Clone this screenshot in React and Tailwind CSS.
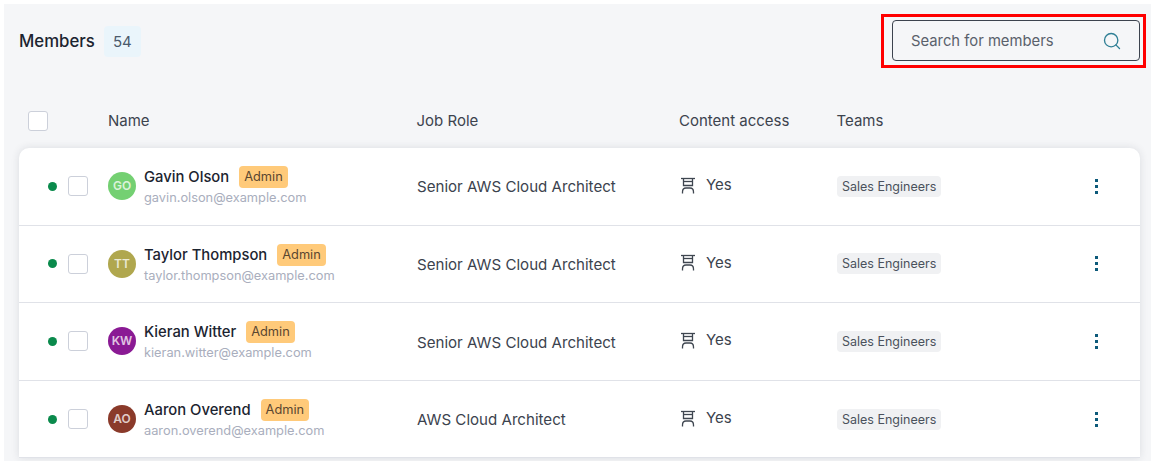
import React from "react";
import { Search } from "lucide-react";

const members = [
  { name: "Gavin Olson", email: "gavin.olson@example.com", initials: "GO", color: "bg-[#74d072]", role: "Senior AWS Cloud Architect" },
  { name: "Taylor Thompson", email: "taylor.thompson@example.com", initials: "TT", color: "bg-[#b0a74e]", role: "Senior AWS Cloud Architect" },
  { name: "Kieran Witter", email: "kieran.witter@example.com", initials: "KW", color: "bg-[#8a1a94]", role: "Senior AWS Cloud Architect" },
  { name: "Aaron Overend", email: "aaron.overend@example.com", initials: "AO", color: "bg-[#8a3a2a]", role: "AWS Cloud Architect" },
];

const AccessIcon = () => (
  <svg width="16" height="17" viewBox="0 0 16 17" fill="none" stroke="#3f4650" strokeWidth="1.3">
    <path d="M1 1.5h14" />
    <path d="M3.5 1.5v7h9v-7" />
    <path d="M3.5 4.5h9" />
    <path d="M2.5 16.5v-1.5c0-2.5 1.5-4 3.5-4h4c2 0 3.5 1.5 3.5 4v1.5" />
  </svg>
);

const Checkbox = () => (
  <div className="w-5 h-5 bg-white border border-[#ccd0da] rounded-[3px]" />
);

const MemberRow = ({ member }) => (
  <div className="flex items-center h-[77.6px] border-b border-[#e0e2e8]">
    <div className="w-[49px] shrink-0 flex justify-end pr-[11px]">
      <span className="w-[9px] h-[9px] rounded-full bg-[#0a8a4c]" />
    </div>
    <Checkbox />
    <div className={`ml-[20px] w-7 h-7 rounded-full flex items-center justify-center text-white/75 text-[12px] font-semibold ${member.color}`}>
      {member.initials}
    </div>
    <div className="ml-[8px] w-[273px] shrink-0">
      <div className="flex items-center gap-[10px]">
        <span className="text-[14.8px] leading-5 font-medium text-[#1c2430]">{member.name}</span>
        <span className="bg-[#ffca7a] text-[#5a4630] text-[12.8px] leading-[22px] px-[5px] rounded-[4px]">Admin</span>
      </div>
      <div className="text-[12.8px] leading-4 text-[#a9aebd] mt-[2px]">{member.email}</div>
    </div>
    <div className="w-[263px] shrink-0 text-[15.1px] text-[#3c434e] pt-[3px]">{member.role}</div>
    <div className="w-[157px] shrink-0 flex items-center gap-[10px] text-[15px] text-[#3c434e] -mt-[2px]">
      <AccessIcon />
      Yes
    </div>
    <div className="w-[258px] shrink-0 -mt-[3px]">
      <span className="inline-block bg-[#f0f1f3] text-[#4a515c] text-[12.5px] leading-[21px] px-[5px] rounded-[4px]">Sales Engineers</span>
    </div>
    <div className="flex flex-col gap-[3px]">
      <span className="w-[3px] h-[3px] bg-[#0d5a7a]" />
      <span className="w-[3px] h-[3px] bg-[#0d5a7a]" />
      <span className="w-[3px] h-[3px] bg-[#0d5a7a]" />
    </div>
  </div>
);

export default function App() {
  return (
    <div className="w-[1169px] h-[475px] bg-white pt-1 pl-1 overflow-hidden font-['Inter','Noto_Sans',sans-serif]">
      <div className="w-[1147px] h-[457px] bg-[#f5f6f8] overflow-hidden px-[15px]">
        <div className="flex items-center justify-between h-[72px] pt-[2px]">
          <div className="flex items-center gap-[9px]">
            <span className="text-[16.8px] font-medium text-[#1c2430] pt-[1px]">Members</span>
            <span className="bg-[#eaf5fb] text-[#4a5a6c] text-[15px] leading-[31px] w-[37px] text-center rounded-[4px]">54</span>
          </div>
          <div className="-mr-[10px] border-[3px] border-[#ff0000] pl-[8px] pr-[3px] pt-[3px] pb-[4px] w-[265px] h-[54px]">
            <div className="h-full border border-[#3c434e] rounded-[4px] flex items-center justify-between pl-[18px] pr-[17px]">
              <span className="text-[14.8px] text-[#5a616c] pt-[1px]">Search for members</span>
              <Search size={20} strokeWidth={1.6} className="text-[#2f7f95]" />
            </div>
          </div>
        </div>
        <div className="flex items-center h-[72px] pt-[18px] text-[15px] text-[#3c434e]">
          <div className="w-[89px] pl-[9px] shrink-0"><Checkbox /></div>
          <div className="w-[308.5px] shrink-0">Name</div>
          <div className="w-[262.5px] shrink-0">Job Role</div>
          <div className="w-[157.5px] shrink-0">Content access</div>
          <div>Teams</div>
        </div>
        <div className="w-[1121px] bg-white rounded-t-[10px] shadow-[0_0_8px_rgba(30,40,60,0.12)]">
          {members.map((member) => (
            <MemberRow key={member.email} member={member} />
          ))}
        </div>
      </div>
    </div>
  );
}
